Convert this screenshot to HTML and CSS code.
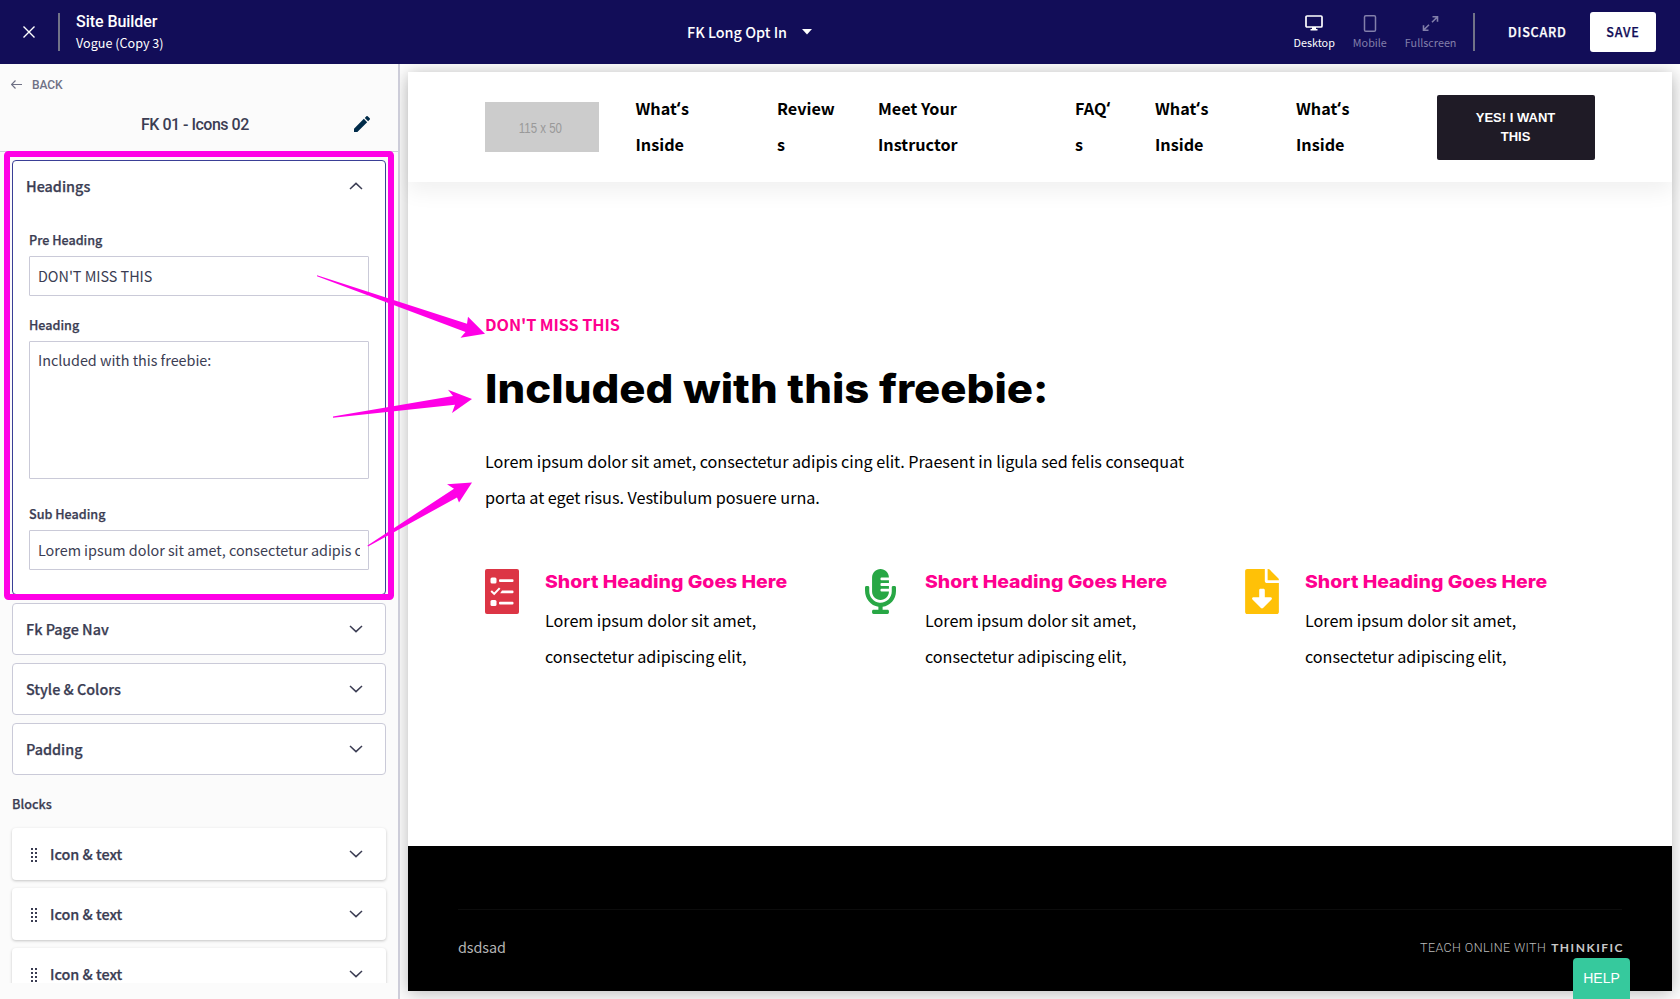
FILE: index.html
```html
<!DOCTYPE html>
<html lang="en">
<head>
<meta charset="utf-8">
<title>Site Builder</title>
<link rel="stylesheet" href="styles.css">
</head>
<body>
<svg class="defs" width="0" height="0">
  <symbol id="down" viewBox="0 0 14 8"><path d="M1 1l6 5.600L13 1" fill="none" stroke="#3b3d53" stroke-width="1.500"/></symbol>
  <symbol id="up" viewBox="0 0 14 8"><path d="M1 7l6-5.600L13 7" fill="none" stroke="#3b3d53" stroke-width="1.500"/></symbol>
  <symbol id="grip" viewBox="0 0 6 14"><path d="M0 0h2v2H0zM4 0h2v2H4zM0 4h2v2H0zM4 4h2v2H4zM0 8h2v2H0zM4 8h2v2H4zM0 12h2v2H0zM4 12h2v2H4z" fill="#3b3d53"/></symbol>
</svg>
<header class="topbar">
  <svg class="close" width="12" height="12" viewBox="0 0 12 12"><path d="M.5.5l11 11M11.500.5l-11 11" stroke="#fff" stroke-width="1.400"/></svg>
  <i class="rule"></i>
  <div class="brand"><b>Site Builder</b><span>Vogue (Copy 3)</span></div>
  <div class="page-select"><span>FK Long Opt In</span><svg width="10" height="6" viewBox="0 0 10 6"><path d="M0 0h10L5 5.500z" fill="#fff"/></svg></div>
  <div class="tools">
    <div class="tool active"><svg width="18" height="17" viewBox="0 0 18 17"><rect x="1" y="1" width="16" height="11" rx="1" fill="none" stroke="#fff" stroke-width="1.700"/><path d="M7 12h4v2h1.500v1.500h-7V14H7z" fill="#fff"/></svg><span>Desktop</span></div>
    <div class="tool mobile"><svg width="14" height="17" viewBox="0 0 14 17"><rect x="1.500" y=".8" width="11" height="15.400" rx="1.300" fill="none" stroke="#827faa" stroke-width="1.500"/></svg><span>Mobile</span></div>
    <div class="tool full"><svg width="17" height="17" viewBox="0 0 17 17"><path d="M10 7.200l5.300-5.200M10.500 1.800h5v5M7 9.800l-5.300 5.200M1.500 10.200v5h5" fill="none" stroke="#827faa" stroke-width="1.600"/></svg><span>Fullscreen</span></div>
  </div>
  <i class="rule"></i>
  <span class="discard">DISCARD</span>
  <span class="save">SAVE</span>
</header>
<div class="workspace">
  <aside class="sidebar">
    <div class="side-head">
      <div class="back"><svg width="11" height="9" viewBox="0 0 11 9"><path d="M4.500.5l-4 4 4 4M.5 4.500H11" fill="none" stroke="#6f7185" stroke-width="1.200"/></svg><span>BACK</span></div>
      <div class="side-title"><span>FK 01 - Icons 02</span><svg width="16" height="16" viewBox="3 3 18 18"><path d="M3 17.250V21h3.750L17.810 9.940l-3.750-3.750zM20.710 7.040a1 1 0 0 0 0-1.410l-2.340-2.340a1 1 0 0 0-1.410 0l-1.830 1.830 3.750 3.750z" fill="#002b49"/></svg></div>
    </div>
    <div class="side-body">
      <section class="panel open">
        <div class="panel-head"><span>Headings</span><svg class="chev" width="14" height="8"><use href="#up"/></svg></div>
        <div class="fields">
          <label class="label">Pre Heading</label>
          <div class="field">DON'T MISS THIS</div>
          <label class="label">Heading</label>
          <div class="field area">Included with this freebie:</div>
          <label class="label">Sub Heading</label>
          <div class="field"><span class="clip">Lorem ipsum dolor sit amet, consectetur adipis cing elit.</span></div>
        </div>
      </section>
      <section class="panel"><div class="panel-head"><span>Fk Page Nav</span><svg class="chev" width="14" height="8"><use href="#down"/></svg></div></section>
      <section class="panel"><div class="panel-head"><span>Style &amp; Colors</span><svg class="chev" width="14" height="8"><use href="#down"/></svg></div></section>
      <section class="panel"><div class="panel-head"><span>Padding</span><svg class="chev" width="14" height="8"><use href="#down"/></svg></div></section>
      <h2 class="blocks-title">Blocks</h2>
      <div class="block"><svg class="grip" width="6" height="14"><use href="#grip"/></svg><span>Icon &amp; text</span><svg class="chev" width="14" height="8"><use href="#down"/></svg></div>
      <div class="block"><svg class="grip" width="6" height="14"><use href="#grip"/></svg><span>Icon &amp; text</span><svg class="chev" width="14" height="8"><use href="#down"/></svg></div>
      <div class="block"><svg class="grip" width="6" height="14"><use href="#grip"/></svg><span>Icon &amp; text</span><svg class="chev" width="14" height="8"><use href="#down"/></svg></div>
    </div>
  </aside>
  <div class="stage">
    <div class="preview">
      <header class="site-head">
        <div class="logo"><span>115 x 50</span></div>
        <nav class="nav"><a>What<q>‘</q>s<br>Inside</a><a>Review<br>s</a><a>Meet Your<br>Instructor</a><a>FAQ<q>‘</q><br>s</a><a>What<q>‘</q>s<br>Inside</a><a>What<q>‘</q>s<br>Inside</a></nav>
        <div class="cta">YES! I WANT<br>THIS</div>
      </header>
      <main class="main">
        <p class="pre">DON'T MISS THIS</p>
        <h1 class="title">Included with this freebie:</h1>
        <p class="lead">Lorem ipsum dolor sit amet, consectetur adipis cing elit. Praesent in ligula sed felis consequat<br>porta at eget risus. Vestibulum posuere urna.</p>
        <div class="features">
          <article class="feature">
            <svg width="34" height="45" viewBox="0 0 34 45"><rect width="34" height="45" rx="2" fill="#dc3545"/><g fill="#fff"><rect x="5.500" y="8.500" width="6" height="6" rx="1.500"/><rect x="5.500" y="31" width="6" height="6" rx="1.500"/><rect x="14" y="10.200" width="14.500" height="2.800" rx="1"/><path d="M17 21.500h10.500q1 0 1 1v.8q0 1-1 1H15.200z"/><rect x="14" y="32.700" width="14.500" height="2.800" rx="1"/></g><path d="M6.200 22l3 2.900 5.500-5.800" fill="none" stroke="#fff" stroke-width="2"/></svg>
            <div><h3>Short Heading Goes Here</h3><p>Lorem ipsum dolor sit amet,<br>consectetur adipiscing elit,</p></div>
          </article>
          <article class="feature">
            <svg width="31" height="45" viewBox="0 0 352 512"><path fill="#28a745" d="M336 192h-16c-8.840 0-16 7.160-16 16v48c0 74.800-64.490 134.820-140.790 127.380C96.710 376.890 48 317.110 48 250.300V208c0-8.840-7.160-16-16-16H16c-8.840 0-16 7.160-16 16v40.160c0 89.640 63.970 169.550 152 181.690V464H96c-8.840 0-16 7.160-16 16v16c0 8.840 7.160 16 16 16h160c8.840 0 16-7.160 16-16v-16c0-8.840-7.160-16-16-16h-56v-33.770C285.710 418.470 352 344.900 352 256v-48c0-8.840-7.160-16-16-16zM176 352c53.020 0 96-42.980 96-96h-85.330c-5.890 0-10.670-3.580-10.670-8v-16c0-4.420 4.780-8 10.670-8H272v-32h-85.330c-5.890 0-10.670-3.580-10.670-8v-16c0-4.420 4.780-8 10.670-8H272v-32h-85.330c-5.890 0-10.670-3.580-10.670-8v-16c0-4.420 4.780-8 10.670-8H272c0-53.020-42.980-96-96-96S80 42.980 80 96v160c0 53.020 42.980 96 96 96z"/></svg>
            <div><h3>Short Heading Goes Here</h3><p>Lorem ipsum dolor sit amet,<br>consectetur adipiscing elit,</p></div>
          </article>
          <article class="feature">
            <svg width="34" height="45" viewBox="0 0 384 512"><path fill="#ffc107" d="M224 136V0H24C10.700 0 0 10.700 0 24v464c0 13.300 10.700 24 24 24h336c13.300 0 24-10.700 24-24V160H248c-13.200 0-24-10.800-24-24zm76.450 211.360l-96.420 95.700c-6.650 6.610-17.390 6.610-24.040 0l-96.420-95.700C73.420 337.290 80.540 320 94.820 320H160v-80c0-8.840 7.160-16 16-16h32c8.840 0 16 7.160 16 16v80h65.180c14.280 0 21.400 17.290 11.270 27.360zM377 105L279.100 7c-4.500-4.500-10.600-7-17-7H256v128h128v-6.100c0-6.300-2.500-12.400-7-16.900z"/></svg>
            <div><h3>Short Heading Goes Here</h3><p>Lorem ipsum dolor sit amet,<br>consectetur adipiscing elit,</p></div>
          </article>
        </div>
      </main>
      <footer class="site-foot">
        <div class="foot-row"><span class="foot-name">dsdsad</span><span class="teach">TEACH ONLINE WITH</span><b class="thinkific">THINKIFIC</b></div>
      </footer>
    </div>
  </div>
</div>
<div class="help">HELP</div>
<svg class="annotations" width="1680" height="999" viewBox="0 0 1680 999">
  <rect x="7" y="154" width="384" height="443" rx="1.500" fill="none" stroke="#ff00e6" stroke-width="6" stroke-linejoin="round"/>
  <g fill="#ff00e6">
    <path d="M317 275.300l150 48.400 1-7 17 17-24.500 4 5-5.700L317 276.300z"/>
    <path d="M333 416.600L453 396l-5-6.300 24 9.300-20 14 3-8.300-122 13z"/>
    <path d="M367.500 545.500L454 488.700l-7-4.500 25-1.700-13 20-2-5-89 49z"/>
  </g>
</svg>
</body>
</html>
```
FILE: styles.css
```css
* { box-sizing: border-box; }
body, h1, h2, h3, p { margin: 0; }
body {
  width: 1680px;
  height: 999px;
  overflow: hidden;
  position: relative;
  font-family: "Noto Sans CJK SC", "Noto Sans", sans-serif;
  color: #3b3d53;
  background: #fff;
}
svg { display: block; flex: none; }
.defs { position: absolute; }

.topbar {
  display: flex;
  align-items: center;
  height: 64px;
  padding-left: 23px;
  background: #120d58;
  color: #fff;
}
.rule { width: 2px; height: 38px; background: #717288; flex: none; }
.close + .rule { margin-left: 23px; }
.brand { display: flex; flex-direction: column; width: 300px; margin-left: 16px; }
.brand b { font: 500 16px/20px Roboto, sans-serif; letter-spacing: -.05px; }
.brand span { font-size: 12.600px; line-height: 21px; }
.page-select { display: flex; align-items: center; gap: 15px; width: 200px; margin-left: 311px; font-weight: 500; font-size: 14.400px; line-height: 24px; }
.tools { display: flex; gap: 18px; width: 170px; margin-left: 406.500px; }
.tool { display: flex; flex-direction: column; align-items: center; font-size: 10.800px; line-height: 18px; color: #827faa; gap: 1px; padding-top: 1px; }
.tool.active { color: #fff; }
.tools + .rule { margin-left: 9.500px; }
.discard, .save { font-weight: 500; font-size: 12.600px; line-height: 20px; letter-spacing: .75px; -webkit-text-stroke: .25px; }
.discard { width: 82px; margin-left: 33px; }
.save { display: flex; justify-content: center; align-items: center; width: 66px; height: 40px; border-radius: 3px; background: #fff; color: #120d58; }

.workspace { display: flex; height: 935px; }
.sidebar { width: 400px; border-right: 2px solid #cdcdd9; background: #fbfbfb; }
.side-head { height: 88px; border-bottom: 1px solid #cdcdd9; padding-top: 12px; }
.back { display: flex; align-items: center; gap: 10px; padding-left: 11px; font: 500 12px/18px Roboto, sans-serif; letter-spacing: -.1px; color: #6f7185; }
.back svg { margin-top: -2px; }
.side-title { display: flex; align-items: center; height: 24px; margin-top: 19px; padding-left: 141px; font: 500 16px/24px Roboto, sans-serif; letter-spacing: -.5px; }
.side-title span { width: 213px; }
.side-title svg { margin-top: -2px; }
.side-body { height: 831px; padding: 8px 12px 0; overflow: hidden; }
.panel { height: 52px; margin-bottom: 8px; border: 1px solid #cacad8; border-radius: 4px; background: #fff; }
.panel.open { height: 435px; border-color: #3a3f96; }
.panel-head { display: flex; align-items: center; justify-content: space-between; height: 50px; padding: 0 22px 0 13px; font-weight: 500; font-size: 14.400px; -webkit-text-stroke: .25px; }
.panel-head span { margin-top: -2px; }
.fields { padding: 19px 16px 0; }
.label { display: block; height: 26px; font-weight: 500; font-size: 12.600px; line-height: 20px; -webkit-text-stroke: .25px; }
.field { height: 40px; margin-bottom: 19px; padding: 0 8px; border: 1px solid #cacad8; border-radius: 1px; font-size: 14.400px; line-height: 38px; letter-spacing: -.03px; overflow: hidden; }
.field.area { height: 138px; margin-bottom: 25px; line-height: 36px; }
.clip { display: block; overflow: hidden; white-space: nowrap; }
.blocks-title { margin: 19px 0 15px; font-weight: 500; font-size: 12.600px; line-height: 19px; -webkit-text-stroke: .25px; }
.block { display: flex; align-items: center; height: 52px; margin-bottom: 8px; padding: 0 23px 0 19px; border-radius: 4px; background: #fff; box-shadow: 0 1px 3px rgba(0, 0, 0, .22); font-weight: 500; font-size: 14.400px; -webkit-text-stroke: .25px; }
.block .grip { margin-top: 2px; }
.block span { flex: 1; margin: -2px 0 0 13px; }

.stage { flex: 1; padding: 8px; background: #fdfdfd; overflow: hidden; }
.preview { height: 919px; display: flex; flex-direction: column; background: #fff; box-shadow: 0 2px 16px rgba(0, 0, 0, .27); color: #000; }
.site-head { display: flex; height: 110px; padding-left: 77px; box-shadow: 0 10px 20px rgba(0, 0, 0, .06); }
.logo { width: 114px; height: 50px; margin-top: 30px; padding-right: 3px; background: #ccc; color: #999; font: 14px/52px "Liberation Sans", sans-serif; text-align: center; }
.logo span { display: inline-block; transform: scaleX(.82); }
.nav { display: grid; grid-template-columns: 141.500px 101px 197px 80px 141px 140.500px; margin: 18px 0 0 36.500px; font-weight: 700; font-size: 16.200px; line-height: 36px; }
.nav q { quotes: none; font-family: "Open Sans", sans-serif; font-size: 17px; line-height: 1; letter-spacing: .5px; }
.cta { width: 158px; height: 65px; margin-top: 23px; padding-top: 13px; border-radius: 2px; background: #1f1b26; color: #fff; font: 700 13px/19px "Liberation Sans", sans-serif; text-align: center; }
.main { height: 664px; padding: 124px 0 0 77px; }
.pre { font-weight: 700; font-size: 16.200px; line-height: 36px; letter-spacing: -.07px; color: #ff0090; }
.title { margin-top: 23px; font: 800 40px/48px Inter, sans-serif; white-space: nowrap; transform: scaleX(1.093); transform-origin: left; }
.lead { margin-top: 30px; font-size: 16.200px; line-height: 36px; letter-spacing: -.035px; white-space: nowrap; }
.features { display: grid; grid-template-columns: repeat(3, 380px); margin-top: 54px; }
.feature { display: flex; white-space: nowrap; }
.feature svg { width: 34px; }
.feature:nth-child(2) svg { width: 31px; margin-right: 3px; }
.feature div { margin-left: 26px; }
.feature h3 { font: 800 18px/25px Inter, sans-serif; color: #ff0090; transform: scaleX(1.083); transform-origin: left; }
.feature p { margin-top: 8px; font-size: 16.200px; line-height: 36px; letter-spacing: -.035px; }
.site-foot { height: 145px; padding: 63px 50px 0; background: #000; }
.foot-row { display: flex; align-items: center; height: 77px; border-top: 1px solid #0c0c0c; }
.foot-name { flex: 1; margin-top: -3px; font-size: 14.400px; letter-spacing: -.1px; color: #b5b5b5; }
.teach { font: 300 12.500px/20px Roboto, sans-serif; letter-spacing: .4px; color: #bbb; }
.thinkific { margin: 0 -2px 0 5px; font: 700 12px/20px Lato, sans-serif; letter-spacing: 1.500px; color: #c8c8c8; }

.help { position: absolute; left: 1573px; top: 958px; width: 57px; height: 41px; border-radius: 4px 4px 0 0; background: #36c99d; color: #fff; font: 14px/40px "Liberation Sans", sans-serif; text-align: center; }
.annotations { position: absolute; left: 0; top: 0; pointer-events: none; }
```
